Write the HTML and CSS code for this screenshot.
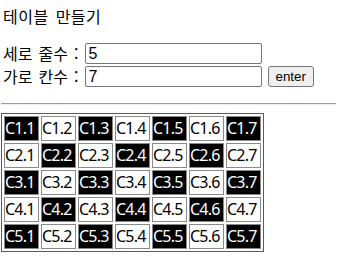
FILE: index.html
```html
<!DOCTYPE html>
<html lang="ko">
<head>
  <meta charset="UTF-8" />
  <title>테이블 만들기</title>
  <link rel="stylesheet" href="styles.css">
</head>
<body>
  <div class="title">테이블 만들기</div>
  <div class="form">
    <div class="row">세로 줄수 : <input type="text" id="rows" value="5" /></div>
    <div class="row">가로 칸수 : <input type="text" id="cols" value="7" /> <button>enter</button></div>
  </div>
  <hr />
  <table class="grid">
    <tr><td class="dark">C1.1</td><td>C1.2</td><td class="dark">C1.3</td><td>C1.4</td><td class="dark">C1.5</td><td>C1.6</td><td class="dark">C1.7</td></tr>
    <tr><td>C2.1</td><td class="dark">C2.2</td><td>C2.3</td><td class="dark">C2.4</td><td>C2.5</td><td class="dark">C2.6</td><td>C2.7</td></tr>
    <tr><td class="dark">C3.1</td><td>C3.2</td><td class="dark">C3.3</td><td>C3.4</td><td class="dark">C3.5</td><td>C3.6</td><td class="dark">C3.7</td></tr>
    <tr><td>C4.1</td><td class="dark">C4.2</td><td>C4.3</td><td class="dark">C4.4</td><td>C4.5</td><td class="dark">C4.6</td><td>C4.7</td></tr>
    <tr><td class="dark">C5.1</td><td>C5.2</td><td class="dark">C5.3</td><td>C5.4</td><td class="dark">C5.5</td><td>C5.6</td><td class="dark">C5.7</td></tr>
  </table>
</body>
</html>
```

FILE: styles.css
```css
body {
  margin: 0 1px;
  font-family: "Noto Sans CJK KR", "Open Sans", sans-serif;
  font-size: 16px;
  color: #000;
  background: #fff;
}

.title {
  margin: 6px 0 0 2px;
  line-height: 21px;
  word-spacing: 2px;
  letter-spacing: 0.5px;
}

.form {
  margin-top: 16px;
  padding-left: 2px;
}

.row {
  height: 23px;
  line-height: 21px;
  word-spacing: 1.6px;
}

.row input {
  box-sizing: border-box;
  width: 177px;
  height: 21px;
  padding: 1px 3px;
  border: 1px solid #767676;
  border-radius: 2px;
  font-family: "Liberation Sans", Arial, sans-serif;
  font-size: 16px;
  vertical-align: top;
  word-spacing: 0;
}

.row button {
  box-sizing: border-box;
  width: 46px;
  height: 21px;
  margin-left: 0;
  padding: 0;
  background: #efefef;
  border: 1px solid #767676;
  border-radius: 3px;
  font-family: "Liberation Sans", Arial, sans-serif;
  font-size: 13.33px;
  vertical-align: top;
  word-spacing: 0;
}

hr {
  margin: 14px -1px 0;
  border: none;
  border-top: 1px solid #9a9a9a;
  border-bottom: 1px solid #eee;
}

.grid {
  margin-top: 8px;
  border: 1px solid #5a5a5a;
  border-spacing: 2px;
}

.grid td {
  width: 33px;
  padding: 1px 0 1px 0;
  border: 1px solid #8a8a8a;
  font-family: "Noto Sans", sans-serif;
  font-size: 16px;
  line-height: 21px;
  letter-spacing: -0.8px;
  text-align: left;
  white-space: nowrap;
  overflow: hidden;
}

.grid td.dark {
  background: #000;
  color: #fff;
}
```
